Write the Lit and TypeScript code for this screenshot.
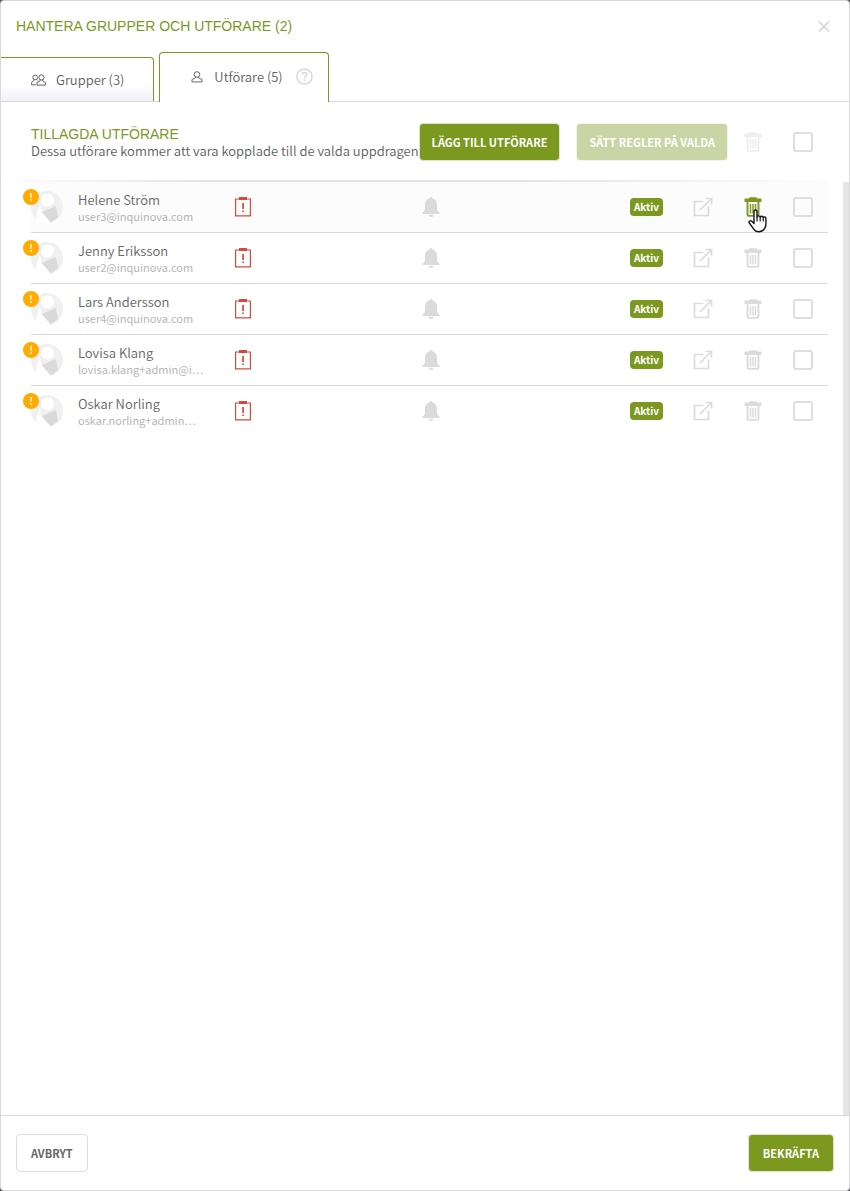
import { LitElement, html, css, svg, nothing } from "lit";
import { customElement, property, state } from "lit/decorators.js";

interface Performer {
  name: string;
  email: string;
}

const PERFORMERS: Performer[] = [
  { name: "Helene Ström", email: "user3@inquinova.com" },
  { name: "Jenny Eriksson", email: "user2@inquinova.com" },
  { name: "Lars Andersson", email: "user4@inquinova.com" },
  { name: "Lovisa Klang", email: "lovisa.klang+admin@i…" },
  { name: "Oskar Norling", email: "oskar.norling+admin…" },
];

const shared = css`
  * {
    box-sizing: border-box;
  }
  button {
    font: inherit;
    color: inherit;
    margin: 0;
    padding: 0;
    border: 0;
    background: none;
    cursor: pointer;
  }
  svg {
    display: block;
    flex: none;
  }
  .cell {
    display: flex;
    align-items: center;
    justify-content: center;
  }
  .icon {
    position: relative;
    color: #dbdbdb;
  }
  .icon:disabled {
    opacity: 0.45;
  }
  .icon.hot {
    color: #7b981f;
  }
  .check {
    appearance: none;
    display: block;
    width: 20px;
    height: 20px;
    margin: 0;
    border: 2px solid #dedede;
    border-radius: 3px;
    background: transparent;
  }
  .check:checked {
    background: #7b981f;
    border-color: #7b981f;
  }
`;

const trashIcon = svg`
  <svg width="18" height="20" viewBox="0 0 18 20" fill="none" stroke="currentColor">
    <path d="M.5 1.500h4.500V1Q5 .2 6 .2h6q1 0 1 .8v.5h4.500v3.500H.5z" fill="currentColor" stroke="none"/>
    <path d="M3.500 5v12Q3.500 18.900 5.200 18.900h7.600Q14.500 18.900 14.500 17V5" stroke-width="1.900"/>
    <path d="M6.500 7v9.500M9 7v9.500M11.500 7v9.500" stroke-width="1.500"/>
  </svg>`;

const handCursor = svg`
  <svg class="hand" width="20" height="24" viewBox="0 0 20 24" fill="#fff" stroke="#14141f" stroke-width="1.400" stroke-linejoin="round" stroke-linecap="round">
    <path d="M6 14.500V2.600Q6 1 7.500 1T9 2.600V8q.3-1.100 1.600-1.100T12.200 8.200q.3-.9 1.500-.9t1.500 1.300q.4-.6 1.400-.6 1.300 0 1.300 1.600V15q0 3-1.400 4.700Q14.500 22.800 11 22.800q-3.500 0-5.300-2.700L1.300 14q-.8-1.400.3-2t2.200.3z"/>
    <path d="M9 8v4M12.200 8.500v3.500M15.200 9v3" fill="none" stroke-width="1.200"/>
  </svg>`;

@customElement("performer-row")
export class PerformerRow extends LitElement {
  @property({ attribute: false }) person!: Performer;
  @property({ type: Boolean }) active = false;

  static styles = [
    shared,
    css`
      :host {
        display: block;
        border-bottom: 1px solid #d9d9d9;
      }
      :host([active]) {
        background: #fcfcfc;
      }
      :host(:last-of-type) {
        border-bottom-color: transparent;
      }
      .row {
        display: grid;
        grid-template-columns: 47px 125px 80px 3fr 1fr 50px 50px 50px;
        align-items: center;
        height: 50px;
      }
      .avatar {
        position: relative;
        width: 32px;
        height: 32px;
      }
      .warn {
        position: absolute;
        left: -8px;
        top: -2px;
      }
      .name {
        color: #666;
        font-size: 13px;
        line-height: 17px;
        white-space: nowrap;
      }
      .email {
        margin-right: -8px;
        color: #b6b6b6;
        font-size: 11px;
        font-weight: 400;
        line-height: 16px;
        overflow: hidden;
        text-overflow: ellipsis;
        white-space: nowrap;
      }
      .status {
        justify-content: flex-end;
        padding-right: 15px;
      }
      .badge {
        padding: 0 4px;
        border-radius: 4px;
        background: #7b981f;
        color: #fff;
        font-size: 10px;
        font-weight: 700;
        line-height: 18px;
      }
      .hand {
        position: absolute;
        left: 4px;
        top: 12px;
      }
    `,
  ];

  render() {
    const { name, email } = this.person;
    return html`
      <div class="row">
        <div class="avatar">
          <svg width="32" height="32" viewBox="0 0 32 32">
            <circle cx="16" cy="16" r="16" fill="#f0f0f0" />
            <path d="M9 13L5.500 22.500 5.500 32H19.500L10.700 21z" fill="#fff" />
            <path d="M10.700 21L24.700 15 27.300 26 20 31.500z" fill="#dadada" />
            <circle cx="16.500" cy="9" r="7" fill="#fff" stroke="#e9e9e9" stroke-width=".6" />
          </svg>
          <svg class="warn" width="16" height="16" viewBox="0 0 16 16">
            <circle cx="8" cy="8" r="8" fill="#ffab00" />
            <path d="M7.200 4h1.600l-.3 5h-1zM7.200 10.300h1.600v1.600H7.200z" fill="#fff" />
          </svg>
        </div>
        <div class="who">
          <div class="name">${name}</div>
          <div class="email">${email}</div>
        </div>
        <div class="cell">
          <button class="icon" aria-label="Regler för ${name}">
            <svg width="16" height="20" viewBox="0 0 16 20">
              <path d="M.6 2h14.800v16.800H.6z" fill="none" stroke="#d9483b" stroke-width="1.200" />
              <path d="M4 0h8v3H4zM7.200 6h1.700v6H7.200zM7.200 13.500h1.700V15H7.200z" fill="#d9483b" />
            </svg>
          </button>
        </div>
        <div class="cell">
          <button class="icon" aria-label="Aviseringar för ${name}">
            <svg width="18" height="20" viewBox="0 0 18 20" fill="currentColor">
              <path d="M9 0q1.400 0 1.500 1.300Q15 2.600 15 8v3.500q0 2.500 2.500 4v1.500H.5v-1.500Q3 14 3 11.500V8q0-5.400 4.500-6.700Q7.600 0 9 0zM6.300 17.700h5.400Q11.300 20 9 20t-2.700-2.300z" />
            </svg>
          </button>
        </div>
        <div class="cell status"><span class="badge">Aktiv</span></div>
        <div class="cell">
          <button class="icon" aria-label="Öppna ${name}">
            <svg width="20" height="20" viewBox="0 0 20 20" fill="none" stroke="currentColor" stroke-width="1.700">
              <path d="M10.500 4.500H1.500v14h14V9.500M7 13L18 2" />
              <path d="M12.500 1.500h6v6" />
            </svg>
          </button>
        </div>
        <div class="cell">
          <button class="icon ${this.active ? "hot" : ""}" aria-label="Ta bort ${name}">
            ${trashIcon}${this.active ? handCursor : nothing}
          </button>
        </div>
        <div class="cell"><input class="check" type="checkbox" aria-label="Välj ${name}" /></div>
      </div>
    `;
  }
}

@customElement("app-root")
export class AppRoot extends LitElement {
  @state() private tab = "performers";

  static styles = [
    shared,
    css`
      :host {
        display: block;
        background: #55585a;
        color: #606060;
        font-family: "Source Sans Pro", "Noto Sans CJK KR", sans-serif;
        font-size: 13px;
        font-weight: 350;
        line-height: 18px;
      }
      .dialog {
        display: flex;
        flex-direction: column;
        min-height: 100vh;
        border: 1px solid #d9d9d9;
        border-radius: 4px;
        background: #fff;
      }
      .head {
        display: flex;
        align-items: center;
        justify-content: space-between;
        height: 51px;
        padding: 0 18px 0 15px;
      }
      h1,
      h2 {
        margin: 0;
        color: #7b981f;
        font-family: "Liberation Sans", Arial, sans-serif;
        font-size: 14px;
        font-weight: 400;
        line-height: 17px;
        text-transform: uppercase;
      }
      .tabs {
        display: flex;
        align-items: flex-end;
        gap: 5px;
        border-bottom: 1px solid #d9d9d9;
      }
      .tab {
        display: flex;
        align-items: center;
        height: 44px;
        padding: 0 29px 0 30px;
        border: 1px solid #7b981f;
        border-bottom: 0;
        border-radius: 0 4px 0 0;
        gap: 10px;
        background: linear-gradient(#fff 65%, #f0f0f8);
      }
      .tab:first-child {
        border-left: 0;
      }
      .tab.current {
        height: 50px;
        margin-bottom: -1px;
        padding: 0 15px 2px 30px;
        border-radius: 4px 4px 0 0;
        background: #fff;
      }
      .help {
        margin-left: 3px;
      }
      .toolbar {
        display: flex;
        align-items: center;
        min-height: 80px;
        padding: 0 15px 0 30px;
        margin-right: 6px;
        background: linear-gradient(90deg, #fff, #e2e2e2 25%, #e2e2e2 60%, #fff) bottom / 100% 2px no-repeat;
      }
      .intro {
        flex: 1;
        line-height: 16px;
        white-space: nowrap;
      }
      .actions {
        display: flex;
        gap: 16px;
      }
      .slot {
        flex: none;
        width: 50px;
      }
      .btn {
        height: 38px;
        padding: 0 12px;
        border: 1px solid #dfe4cd;
        border-radius: 4px;
        background: #7b981f;
        color: #fff;
        font-size: 11px;
        font-weight: 700;
        white-space: nowrap;
      }
      .btn:disabled {
        opacity: 0.4;
      }
      .btn.plain {
        border-color: #dedede;
        background: #fff;
        color: #666;
      }
      .list {
        flex: 1;
        padding: 0 15px 0 30px;
        border-right: 6px solid #e4e4e4;
      }
      .foot {
        display: flex;
        align-items: center;
        justify-content: space-between;
        height: 75px;
        padding: 0 15px;
        border-top: 1px solid #d9d9d9;
      }
      .foot .btn {
        padding: 0 14px;
      }
    `,
  ];

  private tabClass(id: string) {
    return this.tab === id ? "tab current" : "tab";
  }

  render() {
    return html`
      <div class="dialog" role="dialog" aria-labelledby="title">
        <header class="head">
          <h1 id="title">Hantera grupper och utförare (2)</h1>
          <button class="icon" aria-label="Stäng">
            <svg width="14" height="14" viewBox="0 0 14 14" stroke="#d4d4d4" stroke-width="1.600">
              <path d="M2 1.500l10 10M12 1.500L2 11.500" />
            </svg>
          </button>
        </header>
        <div class="tabs" role="tablist">
          <button class=${this.tabClass("groups")} role="tab" aria-selected=${this.tab === "groups"} @click=${() => (this.tab = "groups")}>
            <svg width="15" height="12" viewBox="0 0 15 12" fill="none" stroke="#666">
              <circle cx="4.200" cy="3.400" r="2.400" />
              <circle cx="10.500" cy="3.400" r="2.600" />
              <path d="M2.800 5.800v1L.6 8.300v2.500h4.200M6 5.600l.8.900M9.200 5.800v1.100L6 8.600v2.500h8.400V8.600l-2.700-1.700V5.800" />
            </svg>
            <span>Grupper (3)</span>
          </button>
          <button class=${this.tabClass("performers")} role="tab" aria-selected=${this.tab === "performers"} @click=${() => (this.tab = "performers")}>
            <svg width="14" height="12" viewBox="0 0 14 12" fill="none" stroke="#666">
              <circle cx="7" cy="3.500" r="2.800" />
              <path d="M5.500 6v.9L2 8.500v2.400h10V8.500L8.500 6.900V6" />
            </svg>
            <span>Utförare (5)</span>
            <svg class="help" width="17" height="17" viewBox="0 0 17 17" fill="none" stroke="#d9d9d9" stroke-width="1.500">
              <circle cx="8.500" cy="8.500" r="7.600" />
              <path d="M6.200 6.700Q6.200 4.500 8.500 4.500t2.300 2q0 1.100-1.200 1.800T8.500 10.200M8.500 11.300v1.600" />
            </svg>
          </button>
        </div>
        <section class="toolbar">
          <div class="intro">
            <h2>Tillagda utförare</h2>
            <div>Dessa utförare kommer att vara kopplade till de valda uppdragen</div>
          </div>
          <div class="actions">
            <button class="btn">LÄGG TILL UTFÖRARE</button>
            <button class="btn" disabled>SÄTT REGLER PÅ VALDA</button>
          </div>
          <div class="cell slot"><button class="icon" disabled aria-label="Ta bort valda">${trashIcon}</button></div>
          <div class="cell slot"><input class="check" type="checkbox" aria-label="Välj alla" /></div>
        </section>
        <main class="list">
          ${PERFORMERS.map((p, i) => html`<performer-row .person=${p} ?active=${i === 0}></performer-row>`)}
        </main>
        <footer class="foot">
          <button class="btn plain">AVBRYT</button>
          <button class="btn">BEKRÄFTA</button>
        </footer>
      </div>
    `;
  }
}
